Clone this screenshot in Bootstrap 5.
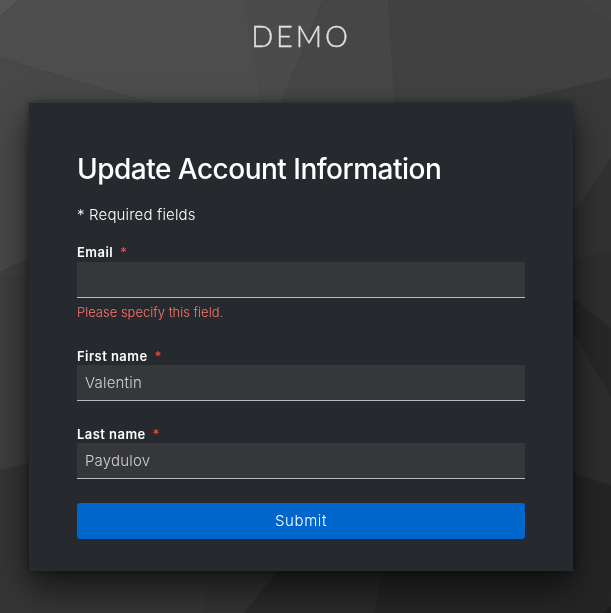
<!DOCTYPE html>
<html lang="en">
<head>
<meta charset="utf-8">
<meta name="viewport" content="width=device-width, initial-scale=1">
<title>Update Account Information</title>
<link href="https://cdn.jsdelivr.net/npm/bootstrap@5.3.0/dist/css/bootstrap.min.css" rel="stylesheet">
<style>
body{background:#353535;color:#fff;font-family:Inter,"Liberation Sans",sans-serif;overflow:hidden}
.backdrop{z-index:-1}
.realm{font-family:Lato,sans-serif;font-weight:300;font-size:29px;line-height:36px;letter-spacing:2.9px;color:#e0e0e0;-webkit-text-stroke:.3px #e0e0e0;padding:18px 9px 49px 0}
.login-card{width:544px;height:468px;margin-left:29px;padding:48px;background:#26292d;box-shadow:0 16px 32px rgba(3,3,3,.64),0 0 8px rgba(3,3,3,.4)}
.title-text{font-size:28px;line-height:36px;font-weight:450;letter-spacing:-.51px;margin-bottom:16px;white-space:nowrap}
.note{font-size:15px;line-height:24px;font-weight:300;letter-spacing:.17px;margin-bottom:16px}
.field-label{font-size:13px;line-height:18px;font-weight:600;letter-spacing:.45px;height:18px;white-space:nowrap}
.first-label{height:19px}
.star{color:#fe5142;font-weight:400;margin-left:3px}
.field{height:36px;padding:5px 8px;border:0;border-bottom:1px solid #b8bbbe;border-radius:0;background:#36373a;color:#d2d2d2;font-size:15px;font-weight:300;line-height:24px;letter-spacing:.2px}
.field:focus{background:#36373a;color:#d2d2d2}
.error-text{font-size:13px;line-height:20px;font-weight:300;color:#ff7468;margin:4px 0 25px}
.group-gap{margin-bottom:24px}
.submit-btn{height:36px;padding:5px 8px;border:0;border-radius:3px;background:#06c;font-size:15px;font-weight:300;line-height:24px;letter-spacing:.6px}
</style>
</head>
<body class="min-vh-100">
<svg class="backdrop position-fixed top-0 start-0" width="611" height="613" viewBox="0 0 611 613" aria-hidden="true">
<rect width="611" height="613" fill="#353535"/>
<path fill="#555" d="M0 0H19L0 16z"/>
<path fill="#4d4d4d" d="M19 0H244L262 103V110H174L0 58V16z"/>
<path fill="#4b4b4b" d="M243 0H323L281 103V110H262V103z"/>
<path fill="#464646" d="M323 0H388L395 103V110H278z"/>
<path fill="#414141" d="M388 0H611V78L505 103V110H395z"/>
<path fill="#434343" d="M580 0H611V22z"/>
<path fill="#484848" d="M0 58L174 110L40 253L0 272z"/>
<path fill="#404040" d="M0 272L40 253V279L0 275z"/>
<path fill="#3e3e3e" d="M0 275L40 279V460L0 470z"/>
<path fill="#333" d="M209 560H286L244 613H204z"/>
<path fill="#2a2a2a" d="M286 560H384L374 613H244z"/>
<path fill="#252525" d="M384 560L560 469L611 485V613H374z"/>
<path fill="#1d1d1d" d="M611 606V613H603z"/>
<path fill="#393939" d="M490 107L611 78V157L560 233z"/>
<path fill="#323232" d="M611 157V251L560 263V233z"/>
<path fill="#2e2e2e" d="M560 263L611 251V328L560 288z"/>
<path fill="#272727" d="M560 288L611 328V398L560 311z"/>
<path fill="#2d2d2d" d="M560 311L611 398V485L560 469z"/>
</svg>
<header class="realm text-center">DEMO</header>
<main class="login-card">
<h1 class="title-text">Update Account Information</h1>
<p class="note">* Required fields</p>
<form>
<label class="field-label first-label d-block" for="email">Email<span class="star"> *</span></label>
<input class="form-control field" id="email" type="text">
<div class="error-text">Please specify this field.</div>
<label class="field-label d-block" for="first">First name<span class="star"> *</span></label>
<input class="form-control field group-gap" id="first" type="text" value="Valentin">
<label class="field-label d-block" for="last">Last name<span class="star"> *</span></label>
<input class="form-control field group-gap" id="last" type="text" value="Paydulov">
<button class="btn btn-primary submit-btn d-block w-100" type="button">Submit</button>
</form>
</main>
<script src="https://cdn.jsdelivr.net/npm/bootstrap@5.3.0/dist/js/bootstrap.bundle.min.js"></script>
</body>
</html>
